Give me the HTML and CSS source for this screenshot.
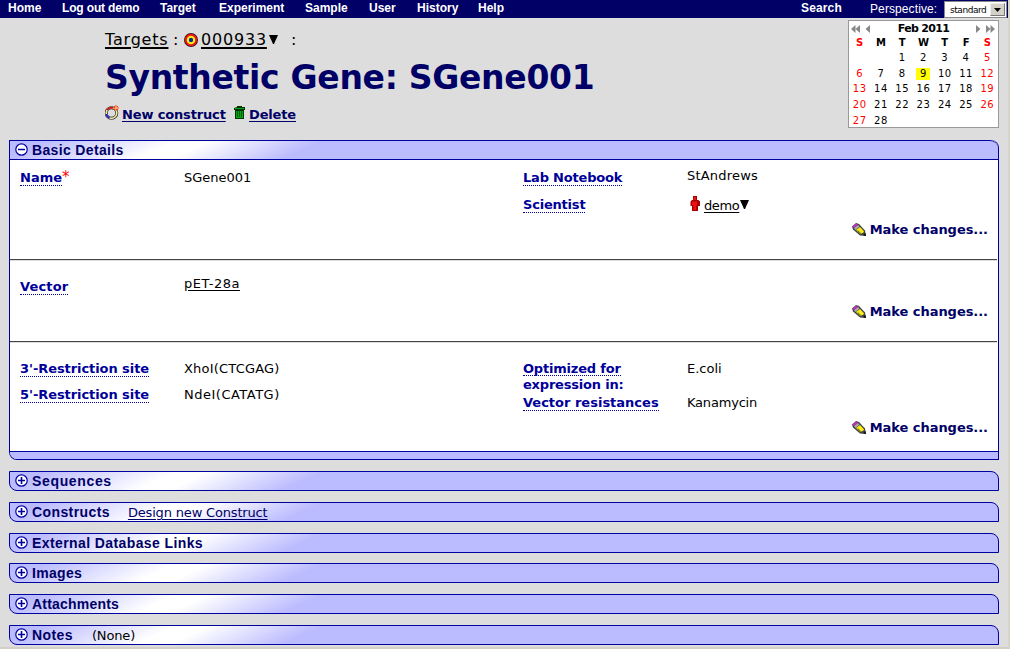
FILE: index.html
```html
<!DOCTYPE html>
<html lang="en">
<head>
<meta charset="utf-8">
<title>Synthetic Gene: SGene001</title>
<link rel="stylesheet" href="styles.css">
</head>
<body>
<svg class="defs" width="0" height="0">
  <defs>
    <symbol id="minus" viewBox="0 0 13 13"><circle cx="6.5" cy="6.5" r="5.7" fill="#fff" stroke="#0000a0" stroke-width="1.2"/><path d="M3 6.5h7" stroke="#0000a0" stroke-width="1.6"/></symbol>
    <symbol id="plus" viewBox="0 0 13 13"><circle cx="6.5" cy="6.5" r="5.7" fill="#fff" stroke="#0000a0" stroke-width="1.2"/><path d="M3 6.5h7M6.5 3v7" stroke="#0000a0" stroke-width="1.6"/></symbol>
    <symbol id="pencil" viewBox="0 0 14 13"><path d="M0 3.500L4 0L7 1L13 7.500L14 13L8 12.500L1 6.500Z" fill="#444"/><path d="M.8 3.600L4 .8L5.800 1.800L2 5Z" fill="#d428d4"/><path d="M2 5.300L6 2L7.500 3.500L3.500 7Z" fill="#aaa"/><path d="M4 7L8 4L12 8.200L11.500 9.500L8.500 11Z" fill="#f8ec18"/><path d="M5 8L6 7.200L9.500 10.500L8.500 11.300Z" fill="#888420"/><path d="M12 11L13.500 10L14 13L11.500 12.500Z" fill="#111"/></symbol>
  </defs>
</svg>
<div class="screen">
  <nav class="menu">
    <a class="m-home">Home</a><a class="m-out">Log out demo</a><a class="m-target">Target</a><a class="m-exp">Experiment</a><a class="m-sample">Sample</a><a class="m-user">User</a><a class="m-hist">History</a><a class="m-help">Help</a>
    <a class="m-search">Search</a><span class="m-persp">Perspective:</span>
    <span class="select"><span class="select-text">standard</span><span class="select-btn"><svg width="7" height="4" viewBox="0 0 7 4"><path d="M0 0h7L3.500 4Z" fill="#000"/></svg></span></span>
  </nav>
  <header class="head">
    <div class="titles">
      <div class="crumbs"><a class="c-targets">Targets</a><span class="c-colon">:</span>
        <svg class="c-icon" width="14" height="14" viewBox="0 0 14 14"><circle cx="7" cy="7" r="7" fill="#222"/><circle cx="7" cy="7" r="6.200" fill="#f01010"/><circle cx="7" cy="7" r="4.300" fill="#ffee20"/><circle cx="7" cy="7" r="2.200" fill="#003090"/></svg>
        <a class="c-id">000933</a><svg class="tri" width="9" height="9" viewBox="0 0 9 9"><path d="M0 0h9L5 9H4Z"/></svg><span class="c-end">:</span></div>
      <h1>Synthetic Gene: SGene001</h1>
      <div class="actions">
        <svg class="ring" width="15" height="15" viewBox="0 0 15 15"><circle cx="6.500" cy="8" r="5.300" fill="none" stroke="#222" stroke-width="3"/><g fill="none" stroke-width="1.700"><circle cx="6.500" cy="8" r="5.300" stroke="#f0e8a0"/><path d="M2.200 4.900A5.300 5.300 0 0 1 8 2.900" stroke="#d01010"/><path d="M1.300 9A5.300 5.300 0 0 0 4.500 12.900" stroke="#2020d0"/></g><path d="M11 0v6M8 3h6M9 1l4 4M13 1l-4 4" stroke="#ff4020"/><circle cx="11" cy="3" r="1" fill="#ffd060"/></svg>
        <a class="a-new">New construct</a>
        <svg class="bin" width="11" height="13" viewBox="0 0 11 13"><path d="M3 0h5v1h3v3h-1v9H1V4H0V2l3-1Z" fill="#053505"/><path d="M1 2h9v1H1zM2 5h7v7H2Z" fill="#00a810"/><path d="M3.500 5v6M5.500 5v6M7.500 5v6" stroke="#006008"/></svg>
        <a class="a-del">Delete</a>
      </div>
    </div>
    <table class="cal">
      <tr class="cal-top"><td class="arrows" colspan="2"><svg width="20" height="8" viewBox="0 0 20 8"><path d="M4.500 0v8L0 4ZM9 0v8L4.500 4ZM19 0v8L14.500 4Z"/></svg></td><th colspan="3">Feb 2011</th><td class="arrows right" colspan="2"><svg width="20" height="8" viewBox="0 0 20 8"><path d="M1 0v8L5.500 4ZM11 0v8L15.500 4ZM15.500 0v8L20 4Z"/></svg></td></tr>
      <tr class="cal-days"><th class="red">S</th><th>M</th><th>T</th><th>W</th><th>T</th><th>F</th><th class="red">S</th></tr>
      <tr><td></td><td></td><td>1</td><td>2</td><td>3</td><td>4</td><td class="red">5</td></tr>
      <tr><td class="red">6</td><td>7</td><td>8</td><td><span class="today">9</span></td><td>10</td><td>11</td><td class="red">12</td></tr>
      <tr><td class="red">13</td><td>14</td><td>15</td><td>16</td><td>17</td><td>18</td><td class="red">19</td></tr>
      <tr><td class="red">20</td><td>21</td><td>22</td><td>23</td><td>24</td><td>25</td><td class="red">26</td></tr>
      <tr><td class="red">27</td><td>28</td><td></td><td></td><td></td><td></td><td></td></tr>
    </table>
  </header>
  <main>
    <section class="box">
      <div class="bar open"><svg class="tog"><use href="#minus"/></svg><h2 class="t-basic">Basic Details</h2></div>
      <div class="part one">
        <div class="col"><div class="row r1"><span class="lab"><b>Name</b><i>*</i></span><span class="val">SGene001</span></div></div>
        <div class="col"><div class="row r1"><span class="lab tight"><b>Lab Notebook</b></span><span class="val up loose">StAndrews</span></div>
          <div class="row"><span class="lab tight"><b>Scientist</b></span><span class="val person"><svg width="10" height="15" viewBox="0 0 10 15"><path d="M3 0h4v4h1.500L10 5.500V10H8v5H2v-5H.5V5.500L2 4h1Z" fill="#a80000"/><path d="M3.500 1h2.500v3H3.500ZM2 5.500h5v4H6V14H3.500V9H2Z" fill="#f01010"/></svg><u>demo</u><svg class="tri" width="9" height="9" viewBox="0 0 9 9"><path d="M0 0h9L5 9H4Z"/></svg></span></div></div>
        <div class="change"><svg width="14" height="13"><use href="#pencil"/></svg><a>Make changes...</a></div>
      </div>
      <div class="part two">
        <div class="col"><div class="row r1"><span class="lab vector"><b>Vector</b></span><span class="val up3 wide"><u>pET-28a</u></span></div></div>
        <div class="change"><svg width="14" height="13"><use href="#pencil"/></svg><a>Make changes...</a></div>
      </div>
      <div class="part three">
        <div class="col"><div class="row r1"><span class="lab site"><b>3'-Restriction site</b></span><span class="val loose">XhoI(CTCGAG)</span></div>
          <div class="row"><span class="lab site"><b>5'-Restriction site</b></span><span class="val wide">NdeI(CATATG)</span></div></div>
        <div class="col"><div class="row r1 tall"><span class="lab tight"><b>Optimized for</b><br><em>expression in:</em></span><span class="val">E.coli</span></div>
          <div class="row"><span class="lab"><b>Vector resistances</b></span><span class="val snug">Kanamycin</span></div></div>
        <div class="change"><svg width="14" height="13"><use href="#pencil"/></svg><a>Make changes...</a></div>
      </div>
      <div class="foot"></div>
    </section>
    <div class="bar"><svg class="tog"><use href="#plus"/></svg><h2 class="t-seq">Sequences</h2></div>
    <div class="bar"><svg class="tog"><use href="#plus"/></svg><h2>Constructs</h2><a class="design">Design new Construct</a></div>
    <div class="bar short"><svg class="tog"><use href="#plus"/></svg><h2>External Database Links</h2></div>
    <div class="bar"><svg class="tog"><use href="#plus"/></svg><h2 class="t-img">Images</h2></div>
    <div class="bar"><svg class="tog"><use href="#plus"/></svg><h2 class="t-att">Attachments</h2></div>
    <div class="bar"><svg class="tog"><use href="#plus"/></svg><h2>Notes</h2><span class="none">(None)</span></div>
  </main>
</div>
</body>
</html>
```
FILE: styles.css
```css
* { box-sizing: border-box; }
body { margin: 0; font-family: "DejaVu Sans", Verdana, sans-serif; font-size: 13px; color: #000; }
.defs { position: absolute; }
.screen { width: 1010px; height: 649px; overflow: hidden; background: #ddd; border-right: 2px solid #d8d4cc; border-bottom: 2px solid #d4d0c8; }
svg { display: block; flex: none; }
a, span, h1, h2 { white-space: nowrap; }

.menu { display: flex; height: 18px; background: #006; color: #fff; font: bold 12px/16px "Liberation Sans", Arial, sans-serif; padding-left: 8px; }
.menu a { flex: none; }
.m-home { width: 54px; }
.menu .m-out { width: 98px; letter-spacing: -.15px; }
.m-target { width: 59px; }
.m-exp { width: 86px; }
.m-sample { width: 64px; }
.m-user { width: 48px; }
.m-hist { width: 61px; }
.m-help { width: 323px; }
.m-search { width: 69px; letter-spacing: .15px; }
.m-persp { width: 74px; flex: none; font-weight: normal; font-size: 12px; letter-spacing: .1px; line-height: 18px; }
.select { display: flex; width: 63px; height: 17px; margin-top: 1px; background: #fff; border: 1px solid #888; color: #000; flex: none; }
.select-text { flex: 1; padding-left: 5px; font: 9px/16px "DejaVu Sans", Verdana, sans-serif; letter-spacing: -.45px; }
.select-btn { width: 15px; margin: 1px; background: #d4d0c8; border: 1px solid #777; border-top-color: #eee; border-left-color: #eee; display: flex; align-items: center; justify-content: center; }

.head { display: flex; justify-content: space-between; height: 122px; padding: 2px 9px 0 105px; }
.crumbs { display: flex; height: 40px; font-size: 16px; line-height: 22px; padding-top: 9px; letter-spacing: .8px; }
.crumbs a { text-decoration: underline; text-decoration-thickness: 2px; text-underline-offset: 2px; }
.c-targets { width: 68px; }
.c-colon { width: 11px; }
.c-icon { margin-top: 4px; margin-right: 3px; }
.c-id { width: 67px; }
.crumbs .tri { margin: 6px 13px 0 1px; }
h1 { margin: 0; height: 42px; font-size: 33px; line-height: 35px; letter-spacing: -.3px; color: #006; }
.actions { display: flex; line-height: 20px; font-weight: bold; color: #006; padding-top: 3px; }
.actions a { text-decoration: underline; text-underline-offset: 2px; }
.ring { margin: 0 2px 0 0; }
.a-new { width: 112px; letter-spacing: -.15px; }
.a-del { letter-spacing: -.15px; }
.bin { margin: 1px 4px 0 0; }

.cal { width: 151px; height: 108px; background: #fff; border: 1px solid #999; border-collapse: separate; border-spacing: 0; table-layout: fixed; font-size: 10px; text-align: center; }
.cal td { height: 15.600px; padding: 2px 0 0; line-height: 13px; letter-spacing: .5px; white-space: nowrap; }
.cal .cal-top > *, .cal .cal-days > * { height: 14px; padding: 2px 0 0; line-height: 12px; }
.cal .cal-top th { letter-spacing: -.7px; font-size: 11px; }
.arrows svg { fill: #888; margin-left: 2px; }
.arrows.right svg { margin-left: 20px; }
.red { color: #f00; }
.today { display: inline-block; width: 14px; height: 12px; line-height: 12px; background: #ff0; }

main { padding: 0 9px; }
.bar { display: flex; height: 20px; margin-bottom: 11px; border: 1px solid #0000a0; border-radius: 0 8px 0 8px; background: linear-gradient(155deg, #bbf 14px, #fff 70px, #fff 84px, #bbf 132px); padding-left: 5px; }
.bar.short { margin-bottom: 10px; }
.bar.open { margin: 0; border-radius: 0 8px 0 0; border-width: 1px 0 1px 0; padding-left: 5px; }
.tog { width: 13px; height: 13px; margin: 2px 4px 0 0; }
h2 { margin: 0; font: bold 14px/18px "Liberation Sans", Arial, sans-serif; letter-spacing: .4px; color: #006; }
.t-basic { letter-spacing: .35px; }
.t-seq { letter-spacing: .65px; }
.t-img { letter-spacing: .3px; }
.t-att { letter-spacing: .2px; }
.design { margin-left: 18px; line-height: 20px; letter-spacing: -.17px; color: #006; text-decoration: underline; text-underline-offset: 2px; }
.none { margin-left: 19px; line-height: 20px; letter-spacing: -.15px; }
.box { height: 320px; margin-bottom: 11px; border: 1px solid #0000a0; border-top: 0; border-radius: 0 8px 0 8px; background: #fff; overflow: hidden; }
.part { display: grid; grid-template-columns: 503px 484px; position: relative; margin-right: 1px; padding-left: 10px; border-bottom: 1px solid #444; box-shadow: 0 1px #ddd; }
.one { height: 100px; padding-top: 9px; }
.two { height: 82px; padding-top: 18px; }
.three { height: 109px; padding-top: 18px; border: 0; box-shadow: none; }
.row { display: flex; height: 26px; line-height: 17px; }
.one .row { height: 27px; }
.row.tall { height: 34px; }
.lab { width: 164px; font-weight: bold; color: #009; line-height: 16px; }
.lab b { display: inline-block; height: 17px; line-height: 17px; border-bottom: 1px dotted #009; }
.lab.tight { letter-spacing: -.2px; }
.lab.site { letter-spacing: -.07px; }
.lab.vector { letter-spacing: .15px; }
.tall b { height: 16px; }
.lab em { font-style: normal; }
.lab i { font-style: normal; font-weight: normal; font-size: 15px; color: #f00; }
.val.up { margin-top: -2px; }
.val.up3 { margin-top: -3px; }
.val.loose { letter-spacing: .2px; }
.val.wide { letter-spacing: .5px; }
.val.snug { letter-spacing: -.2px; }
u { text-underline-offset: 2px; }
.person { display: flex; padding-left: 3px; }
.person u { margin: 1px 1px 0 4px; letter-spacing: -.4px; }
.person .tri { margin-top: 4px; }
.change { position: absolute; right: 9px; bottom: 21px; display: flex; gap: 4px; line-height: 17px; font-weight: bold; letter-spacing: -.05px; color: #006; }
.change svg { margin-top: 2px; }
.three .change { bottom: 15px; }
.foot { height: 8px; background: #bbf; border-top: 1px solid #0000a0; }
```
